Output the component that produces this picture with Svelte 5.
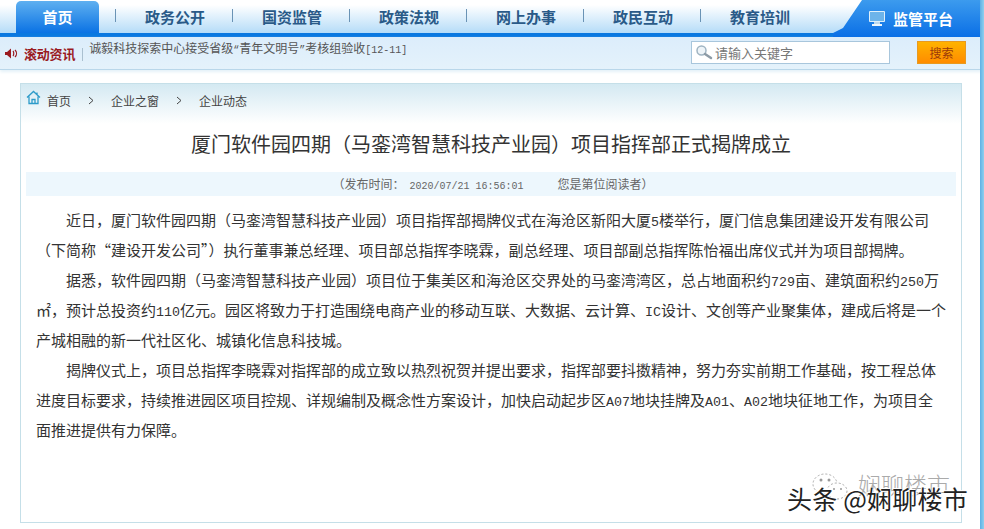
<script>
	const navItems = ['政务公开', '国资监管', '政策法规', '网上办事', '政民互动', '教育培训'];
	const crumbs = ['企业之窗', '企业动态'];
	const paragraphs = [
		['近日，厦门软件园四期（马銮湾智慧科技产业园）项目指挥部揭牌仪式在海沧区新阳大厦5楼举行，厦门信息集团建设开发有限公司', '（下简称“建设开发公司”）执行董事兼总经理、项目部总指挥李晓霖，副总经理、项目部副总指挥陈怡福出席仪式并为项目部揭牌。'],
		['据悉，软件园四期（马銮湾智慧科技产业园）项目位于集美区和海沧区交界处的马銮湾湾区，总占地面积约729亩、建筑面积约250万', '㎡，预计总投资约110亿元。园区将致力于打造围绕电商产业的移动互联、大数据、云计算、IC设计、文创等产业聚集体，建成后将是一个', '产城相融的新一代社区化、城镇化信息科技城。'],
		['揭牌仪式上，项目总指挥李晓霖对指挥部的成立致以热烈祝贺并提出要求，指挥部要抖擞精神，努力夯实前期工作基础，按工程总体', '进度目标要求，持续推进园区项目控规、详规编制及概念性方案设计，加快启动起步区A07地块挂牌及A01、A02地块征地工作，为项目全', '面推进提供有力保障。']
	];

	// latin runs are half-width in the original bitmap font
	function segments(text, re = /([A-Za-z0-9]+)/) {
		return text.split(re).map((t, i) => ({ t, latin: i % 2 === 1 }));
	}
</script>

<div class="page">
	<nav class="nav">
		<a class="home">首页</a>
		{#each navItems as item}
			<a class="nav-item"><i class="sep"></i>{item}</a>
		{/each}
		<div class="platform">
			<svg width="18" height="17" viewBox="0 0 18 17">
				<rect x="1" y="1" width="16" height="11" rx="1" fill="#dff0fb" />
				<rect x="2" y="2" width="14" height="9" fill="#6db4ea" />
				<path d="M6 12h6v2H6z" fill="#bcd9ee" />
				<path d="M4 14h10v2H4z" fill="#eef7fd" />
			</svg>
			<span>监管平台</span>
		</div>
	</nav>

	<div class="ticker">
		<svg class="speaker" width="13" height="11" viewBox="0 0 13 11">
			<path d="M0 4h2l4-3.500v10L2 7H0z" fill="#9a1a1f" />
			<path d="M8 3c1 1 1 4 0 5M10 2c2 2 2 5 0 7" fill="none" stroke="#9a1a1f" stroke-width="1.200" />
		</svg>
		<b class="ticker-label">滚动资讯</b>
		<i class="ticker-sep"></i>
		<span class="ticker-text">{#each segments('诚毅科技探索中心接受省级“青年文明号”考核组验收[12-11]', /([“”]|\[12-11\])/) as s}{#if s.latin}<span class="latin">{s.t}</span>{:else}{s.t}{/if}{/each}</span>
		<div class="search">
			<svg width="18" height="16" viewBox="0 0 18 16">
				<circle cx="6.500" cy="6.500" r="4.500" fill="#eef4f8" stroke="#9fb4c2" stroke-width="1.500" />
				<path d="M10 10l6 4" stroke="#8d9ba6" stroke-width="2.500" stroke-linecap="round" />
			</svg>
			<span>请输入关键字</span>
		</div>
		<button class="search-btn">搜索</button>
	</div>

	<main class="card">
		<div class="crumbs">
			<svg class="home-icon" width="15" height="15" viewBox="0 0 15 15">
				<path d="M1 7.500L7.500 1.500 14 7.500M3 6.500V13.500H12V6.500M6 13.500V9.500H9V13.500M11 2.500V4.500" fill="none" stroke="#2d9bc9" stroke-width="1.300" />
			</svg>
			<span class="crumb-first">首页</span>
			{#each crumbs as c}
				<svg class="chev" width="6" height="9" viewBox="0 0 6 9"><path d="M1 1l4 3.500-4 3.500" fill="none" stroke="#444" /></svg>
				<span>{c}</span>
			{/each}
		</div>
		<h1>厦门软件园四期（马銮湾智慧科技产业园）项目指挥部正式揭牌成立</h1>
		<div class="meta">（发布时间：<span class="latin date"> 2020/07/21 16:56:01</span><span class="reader">您是第位阅读者）</span></div>
		<article>
			{#each paragraphs as lines}
				{#each lines as line, i}
					<p class:indent={i === 0}>{#each segments(line) as s}{#if s.latin}<span class="latin">{s.t}</span>{:else}{s.t}{/if}{/each}</p>
				{/each}
			{/each}
		</article>
	</main>

	<div class="edge"></div>
	<div class="watermark">
		<svg class="wm-icon" width="38" height="30" viewBox="0 0 38 30">
			<ellipse cx="14" cy="12" rx="12" ry="10" fill="#fff" stroke="#aaa" stroke-dasharray="2 2" />
			<ellipse cx="26" cy="19" rx="10" ry="8" fill="#fff" stroke="#aaa" stroke-dasharray="2 2" />
			<circle cx="10" cy="8" r="1.500" fill="#999" />
			<circle cx="18" cy="8" r="1.500" fill="#999" />
			<circle cx="23" cy="17" r="1" fill="#999" />
			<circle cx="30" cy="17" r="1" fill="#999" />
		</svg>
		<span class="wm-back">娴聊楼市</span>
		<span class="wm-front">头条 @娴聊楼市</span>
	</div>
</div>

<style>
	:global(body) {
		margin: 0;
		background: #fff;
	}

	.page {
		position: relative;
		width: 984px;
		height: 529px;
		overflow: hidden;
		font-family: "Noto Sans CJK SC", "Liberation Sans", sans-serif;
		color: #333;
	}

	.latin {
		font-family: "Liberation Mono", monospace;
		font-size: 0.834em;
		line-height: 0;
	}

	.nav {
		display: flex;
		height: 37px;
		box-sizing: border-box;
		padding-left: 16px;
		border-bottom: 4px solid #0a78e0;
		background: linear-gradient(#fff, #fff 15%, #b5dcf8);
	}

	.home {
		width: 83px;
		margin-top: 1px;
		border-radius: 5px 5px 0 0;
		background: linear-gradient(#5fb0f0, #0a72e4);
		color: #fff;
		font-size: 15px;
		font-weight: 700;
		line-height: 32px;
		text-align: center;
	}

	.nav-item {
		position: relative;
		width: 117px;
		box-sizing: border-box;
		padding-left: 46px;
		color: #2a5a88;
		font-size: 15px;
		font-weight: 700;
		line-height: 33px;
		white-space: nowrap;
	}

	.sep {
		position: absolute;
		left: 16px;
		top: 9px;
		width: 1px;
		height: 13px;
		background: #6a93b5;
	}

	.platform {
		display: flex;
		align-items: center;
		gap: 7px;
		width: 151px;
		margin: 0 0 -4px auto;
		padding-left: 35px;
		box-sizing: border-box;
		clip-path: polygon(29px 0, 100% 0, 100% 100%, 0 100%, 0 33px, 10px 28px);
		background: linear-gradient(#3c9bee, #0a6fe6);
		color: #fff;
		font-size: 15px;
		font-weight: 700;
	}

	.ticker {
		display: flex;
		align-items: center;
		height: 33px;
		box-sizing: border-box;
		padding-left: 5px;
		border-bottom: 1px solid #b9d7ea;
		background: linear-gradient(#dcedfb, #e4f2fb);
		box-shadow: 0 2px 3px #e4f1f8;
	}

	.speaker {
		margin-right: 6px;
	}

	.ticker-label {
		margin-top: 1px;
		color: #9a1a1f;
		font-size: 13px;
		letter-spacing: -0.200px;
	}

	.ticker-sep {
		width: 1px;
		height: 13px;
		margin: 2px 6px 0 7px;
		background: #aac0d0;
	}

	.ticker-text {
		margin-top: -12px;
		color: #555;
		font-size: 12px;
		white-space: nowrap;
	}

	.search {
		display: flex;
		align-items: center;
		gap: 2px;
		width: 199px;
		height: 23px;
		margin: -2px 0 0 auto;
		padding-left: 3px;
		box-sizing: border-box;
		border: 1px solid #a8c6dc;
		background: #fff;
		color: #777;
		font-size: 13px;
	}

	.search-btn {
		width: 49px;
		height: 23px;
		margin: -2px 18px 0 27px;
		padding: 0;
		border: 1px solid #e89a20;
		background: linear-gradient(#ffb300, #ff8c00);
		color: #9a3a0a;
		font-family: inherit;
		font-size: 12px;
	}

	.card {
		height: 440px;
		margin: 13px 22px 0 20px;
		box-sizing: border-box;
		border: 1px solid #c5dfe8;
		background: linear-gradient(#d4e9f2, #fff 40px);
	}

	.crumbs {
		display: flex;
		align-items: center;
		height: 33px;
		padding-left: 5px;
		color: #444;
		font-size: 12px;
	}

	.home-icon {
		margin: -6px 6px 0 0;
	}

	.crumb-first {
		margin-right: 17px;
	}

	.chev {
		margin-right: 17px;
	}

	.chev + span {
		margin-right: 17px;
	}

	h1 {
		margin: 9px 0 0;
		color: #333;
		font-size: 20px;
		font-weight: 400;
		line-height: 36px;
		text-align: center;
	}

	.meta {
		height: 24px;
		margin: 10px 5px 0 5px;
		padding-left: 4px;
		background: #edf7fd;
		color: #666;
		font-size: 12px;
		line-height: 24px;
		text-align: center;
	}

	.date {
		margin-left: 5px;
	}

	.reader {
		margin-left: 34px;
	}

	article {
		margin-top: 9px;
		padding-left: 15px;
		color: #333;
		font-size: 15px;
		line-height: 30px;
	}

	article .latin {
		font-size: 13.300px;
	}

	p {
		margin: 0;
		white-space: nowrap;
	}

	.indent {
		padding-left: 30px;
	}

	.edge {
		position: absolute;
		top: 0;
		right: 0;
		bottom: 0;
		width: 4px;
		background: linear-gradient(90deg, #5fb0e4, #8fd0ee);
	}

	.watermark {
		position: absolute;
		left: 0;
		top: 0;
		pointer-events: none;
	}

	.wm-icon {
		position: absolute;
		left: 811px;
		top: 472px;
	}

	.wm-back {
		position: absolute;
		left: 858px;
		top: 467px;
		color: #aaa;
		font-size: 23px;
		font-weight: 300;
		white-space: nowrap;
	}

	.wm-front {
		position: absolute;
		left: 787px;
		top: 480px;
		color: #222;
		font-size: 25px;
		letter-spacing: 0.200px;
		white-space: nowrap;
		text-shadow: 1px 1px 0 #fff, -1px -1px 0 #fff;
	}
</style>
